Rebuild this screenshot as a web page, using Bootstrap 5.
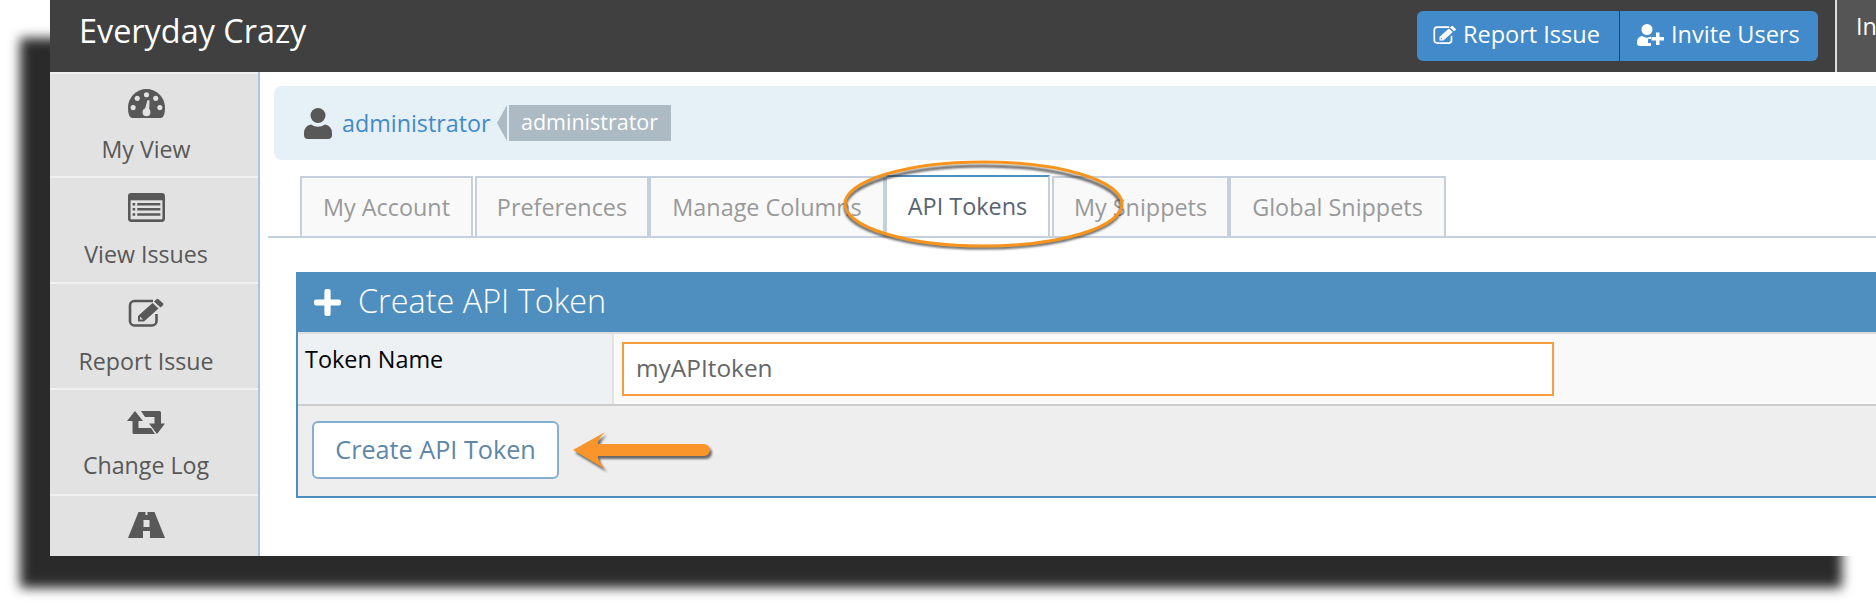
<!DOCTYPE html>
<html lang="en">
<head>
    <meta charset="UTF-8">
    <meta name="viewport" content="width=device-width, initial-scale=1.0">
    <title>API Tokens - Everyday Crazy</title>
    <link href="https://cdn.jsdelivr.net/npm/bootstrap@5.3.0/dist/css/bootstrap.min.css" rel="stylesheet">
    <script src="https://cdn.jsdelivr.net/npm/bootstrap@5.3.0/dist/js/bootstrap.bundle.min.js"></script>
    <style>
        html, body {
            height: 606px;
            overflow: hidden;
            background: #fff;
        }
        body {
            font-family: "Open Sans", sans-serif;
            font-size: 23.4px;
            position: relative;
        }
        /* blurred drop shadow behind the screenshot window */
        .drop-shade {
            position: absolute;
            left: 20px;
            top: 38px;
            width: 1822px;
            height: 550px;
            background: #2a2a2a;
            filter: blur(6px);
        }
        .app-window {
            position: absolute;
            left: 50px;
            top: 0;
            right: 0;
            height: 556px;
            background: #fff;
            overflow: hidden;
        }
        .top-bar {
            height: 72px;
            background: #404040;
            padding: 0;
            flex-wrap: nowrap;
        }
        .top-bar .navbar-brand {
            margin: -12px 0 0 29px;
            padding: 0;
            color: #fff;
            font-size: 32.4px;
            line-height: 60px;
        }
        .bar-btns {
            margin-left: auto;
            margin-right: 17px;
            gap: 2px;
        }
        .bar-btns .btn {
            background: #428aca;
            border: 0;
            color: #fff;
            font-size: 23.5px;
            height: 50px;
            padding: 0 0 3px 0;
            display: flex;
            align-items: center;
            gap: 7px;
            --bs-border-radius: 8px;
        }
        .bar-btns .btn-a { width: 202px; padding-left: 16px; gap: 6px; }
        .bar-btns .btn-b { width: 198px; padding-left: 17px; }
        .user-slot {
            width: 41px;
            height: 72px;
            background: #555;
            border-left: 2px solid #ddd;
            color: #fff;
            padding: 9px 0 0 19px;
            white-space: nowrap;
            overflow: hidden;
            flex: none;
        }
        .page-body { height: 484px; }
        .side-col {
            width: 210px;
            flex: none;
            background: #e2e2e2;
            border-right: 2px solid #a6c8e0;
            overflow: hidden;
        }
        .side-item {
            height: 106px;
            border-top: 2px solid #f0f0f0;
            color: #585858;
            text-decoration: none;
            font-size: 23.2px;
            text-align: center;
            display: block;
            padding-right: 16px;
        }
        .side-item:first-child { height: 104px; }
        .side-item svg { display: block; margin: 0 auto; fill: #585858; }
        .side-item span { display: block; line-height: 30px; white-space: nowrap; }
        .ic-1 { padding-top: 15px; }
        .ic-1 span { margin-top: 16px; }
        .ic-2 { padding-top: 15px; }
        .ic-2 span { margin-top: 17px; }
        .ic-3 { padding-top: 14px; }
        .ic-3 span { margin-top: 18px; }
        .ic-4 { padding-top: 21px; }
        .ic-4 span { margin-top: 16px; }
        .ic-5 { padding-top: 16px; }
        .main-col { flex: 1; min-width: 0; }
        .crumb-bar {
            margin: 14px 0 0 14px;
            height: 74px;
            background: #e6f0f7;
            border-radius: 8px 0 0 8px;
            padding-left: 30px;
        }
        .crumb-bar svg { fill: #585858; flex: none; }
        .crumb-bar a {
            color: #428aca;
            text-decoration: none;
            margin-left: 10px;
            font-size: 23.3px;
        }
        .role-tag {
            position: relative;
            margin-left: 18px;
            height: 36px;
            width: 162px;
            background: #abbac3;
            color: #fff;
            text-align: center;
            line-height: 34px;
            font-size: 21.5px;
        }
        .role-tag::before {
            content: "";
            position: absolute;
            left: -12px;
            top: 0;
            border-style: solid;
            border-width: 18px 10px 18px 0;
            border-color: transparent #abbac3 transparent transparent;
        }
        .tab-row {
            margin: 16px 0 0 8px;
            padding-left: 32px;
            height: 62px;
            border-bottom: 2px solid #c5d0dc;
            flex-wrap: nowrap;
        }
        .tab-row .nav-link {
            height: 60px;
            padding: 0;
            border: 2px solid #c5d0dc;
            border-bottom: 0;
            border-radius: 0;
            background: #f9f9f9;
            color: #999;
            font-size: 23.4px;
            line-height: 58px;
            text-align: center;
        }
        .tab-row .nav-link.active {
            background: #fff;
            color: #576373;
            border-top-color: #4f8fc0;
            margin-top: -1px;
            height: 61px;
        }
        .tab-w1 { width: 173px; margin-right: 2px; }
        .tab-w2 { width: 174px; }
        .tab-w3 { width: 236px; }
        .tab-w4 { width: 165px; margin-right: 2px; }
        .tab-w5 { width: 177px; }
        .tab-w6 { width: 217px; }
        .token-box {
            margin: 34px 0 0 36px;
            width: 1700px;
            border: 0;
            border-left: 2px solid #4f8fc0;
            border-bottom: 2px solid #4f8fc0;
            border-radius: 0;
            background: #eee;
        }
        .token-head {
            margin-left: -2px;
            height: 60px;
            background: #4f8fc0;
            color: #fff;
            font-size: 32.4px;
            font-weight: 300;
            padding: 0 0 3px 18px;
            gap: 17px;
            border: 0;
            border-radius: 0 !important;
        }
        .token-head svg { fill: #fff; flex: none; margin-top: 3px; }
        .token-row {
            height: 74px;
            border-top: 2px solid #ddd;
            border-bottom: 2px solid #ccc;
        }
        .token-label {
            width: 316px;
            flex: none;
            background: #edf1f4;
            border-right: 2px solid #e2e2e2;
            color: #000;
            font-size: 23.4px;
            padding: 10px 0 0 7px;
            line-height: 30px;
        }
        .token-value {
            flex: 1;
            background: #f9f9f9;
            padding: 8px 0 0 8px;
        }
        .token-input {
            width: 932px;
            height: 54px;
            border: 2px solid #f89c40;
            border-radius: 0;
            color: #666;
            font-size: 24.4px;
            padding: 0 12px 3px;
            background: #fff;
        }
        .token-foot {
            height: 90px;
            background: #eee;
            padding: 15px 0 0 14px;
            border: 0;
            border-radius: 0 !important;
        }
        .token-foot .btn {
            width: 247px;
            height: 58px;
            padding: 0;
            border: 2px solid #85aed0;
            background: #fff;
            color: #5e87a8;
            font-size: 25.2px;
            border-radius: 6px;
        }
        .notes-layer {
            position: absolute;
            left: 0;
            top: 0;
            pointer-events: none;
        }
    </style>
</head>
<body>
<svg width="0" height="0" class="d-block">
    <defs>
        <symbol id="ic-edit" viewBox="0 0 37 30">
            <path d="M25 3H6.500a4.500 4.500 0 0 0-4.500 4.500V23a4.500 4.500 0 0 0 4.500 4.500H24a4.500 4.500 0 0 0 4.500-4.500V16" fill="none" stroke="currentColor" stroke-width="2.600"/>
            <path fill="currentColor" fill-rule="evenodd" d="M10 23.500V18L24.500 5 30.500 10.500 16 23.500ZM12 21.500H15L12 18.800ZM26 3.500 28.500 1.200Q29.500 .500 30.500 1.200L35 5.200Q36 6.200 35 7.300L32.500 9.400Z"/>
        </symbol>
        <symbol id="ic-user" viewBox="0 0 28 31">
            <circle cx="14" cy="7.500" r="7.500" fill="currentColor"/>
            <path fill="currentColor" d="M0 25Q0 18 7 16.500 14 21 21 16.500 28 18 28 25V27Q28 31 24 31H4Q0 31 0 27Z"/>
        </symbol>
    </defs>
</svg>

<div class="drop-shade"></div>

<div class="app-window">
    <nav class="navbar top-bar d-flex align-items-center">
        <a class="navbar-brand" href="#">Everyday Crazy</a>
        <div class="btn-group bar-btns">
            <a class="btn btn-a" href="#">
                <svg width="24" height="20" viewBox="0 0 37 30" style="color:#fff"><use href="#ic-edit"/></svg>Report Issue
            </a>
            <a class="btn btn-b" href="#">
                <svg width="27" height="22" viewBox="0 0 27 22" fill="#fff"><circle cx="10" cy="5.500" r="5.500"/><path d="M0 18Q0 13 5 12 10 15 14 12.500V15H11V19H14V22H3Q0 22 0 19Z"/><path d="M19 8.500H22.500V13H27V16.500H22.500V21H19V16.500H14.500V13H19Z"/></svg>Invite Users
            </a>
        </div>
        <div class="user-slot">In</div>
    </nav>

    <div class="d-flex page-body">
        <div class="side-col">
            <a class="side-item ic-1" href="#">
                <svg width="37" height="29" viewBox="0 0 36 28">
                    <path d="M4 28Q0 28 0 18A18 18 0 0 1 36 18Q36 28 32 28Z"/>
                    <g fill="#e2e2e2">
                        <circle cx="18" cy="5.500" r="2.500"/><circle cx="9" cy="9" r="2.500"/><circle cx="27" cy="9" r="2.500"/>
                        <circle cx="5" cy="18" r="2.500"/><circle cx="31" cy="18" r="2.500"/>
                        <circle cx="18" cy="22.500" r="3.800"/><path d="M16 21 19 10.500 21 11 20.500 22Z"/>
                    </g>
                </svg>
                <span>My View</span>
            </a>
            <a class="side-item ic-2" href="#">
                <svg width="37" height="29" viewBox="0 0 36 28">
                    <rect width="36" height="28" rx="3"/>
                    <rect x="2.500" y="7" width="31" height="18.500" fill="#e2e2e2"/>
                    <path d="M9 9.500H31.500V12H9ZM9 14.500H31.500V17H9ZM9 19.500H31.500V22H9ZM4.500 9.500H7V12H4.500ZM4.500 14.500H7V17H4.500ZM4.500 19.500H7V22H4.500Z"/>
                </svg>
                <span>View Issues</span>
            </a>
            <a class="side-item ic-3" href="#">
                <svg width="37" height="30" viewBox="0 0 37 30" style="color:#585858"><use href="#ic-edit"/></svg>
                <span>Report Issue</span>
            </a>
            <a class="side-item ic-4" href="#">
                <svg width="38" height="23" viewBox="0 0 38 23">
                    <path d="M8 0 16 10H11.500V17H24L28 23H7Q5.500 23 5.500 21.500V10H0Z"/>
                    <path d="M14 0H32.500Q34 0 34 1.500V12.500H38L30 23 22 12.500H27.500V6H18Z"/>
                </svg>
                <span>Change Log</span>
            </a>
            <a class="side-item ic-5" href="#">
                <svg width="37" height="26" viewBox="0 0 37 26">
                    <path d="M10.500 0H26.500L37 26H0Z"/>
                    <path fill="#e2e2e2" d="M17.500 0H19.500V3H17.500ZM15.500 8H21.500V15H15.500ZM15 19H22V26H15Z"/>
                </svg>
            </a>
        </div>

        <div class="main-col">
            <div class="crumb-bar d-flex align-items-center">
                <svg width="28" height="31" viewBox="0 0 28 31" style="color:#585858"><use href="#ic-user"/></svg>
                <a href="#">administrator</a>
                <span class="role-tag">administrator</span>
            </div>

            <ul class="nav tab-row">
                <li class="nav-item"><a class="nav-link tab-w1" href="#">My Account</a></li>
                <li class="nav-item"><a class="nav-link tab-w2" href="#">Preferences</a></li>
                <li class="nav-item"><a class="nav-link tab-w3" href="#">Manage Columns</a></li>
                <li class="nav-item"><a class="nav-link tab-w4 active" href="#">API Tokens</a></li>
                <li class="nav-item"><a class="nav-link tab-w5" href="#">My Snippets</a></li>
                <li class="nav-item"><a class="nav-link tab-w6" href="#">Global Snippets</a></li>
            </ul>

            <div class="card token-box">
                <div class="card-header token-head d-flex align-items-center">
                    <svg width="27" height="27" viewBox="0 0 26 26"><path d="M10 2Q10 0 12 0H14Q16 0 16 2V10H24Q26 10 26 12V14Q26 16 24 16H16V24Q16 26 14 26H12Q10 26 10 24V16H2Q0 16 0 14V12Q0 10 2 10H10Z"/></svg>
                    Create API Token
                </div>
                <div class="d-flex token-row">
                    <div class="token-label">Token Name</div>
                    <div class="token-value">
                        <input class="form-control token-input" type="text" value="myAPItoken">
                    </div>
                </div>
                <div class="card-footer token-foot">
                    <button class="btn" type="button">Create API Token</button>
                </div>
            </div>
        </div>
    </div>
</div>

<!-- hand-drawn callouts on top of the screenshot -->
<svg class="notes-layer" width="1876" height="606" viewBox="0 0 1876 606">
    <defs>
        <filter id="soft" x="-10%" y="-30%" width="120%" height="160%"><feGaussianBlur stdDeviation="1.300"/></filter>
    </defs>
    <ellipse cx="983" cy="207" rx="138" ry="41" fill="none" stroke="#333" stroke-width="3" opacity=".75" filter="url(#soft)"/>
    <ellipse cx="983.500" cy="204" rx="138.500" ry="42" fill="none" stroke="#f7941e" stroke-width="3"/>
    <path d="M575 453 607 435Q599 443 600 447H706a6 6 0 0 1 0 12H600Q599 463 607 472Z" fill="#333" opacity=".7" filter="url(#soft)"/>
    <path d="M573 450 605 432Q597 440 598 444H704a6 6 0 0 1 0 12H598Q597 460 605 469Z" fill="#f9952a"/>
</svg>
</body>
</html>
